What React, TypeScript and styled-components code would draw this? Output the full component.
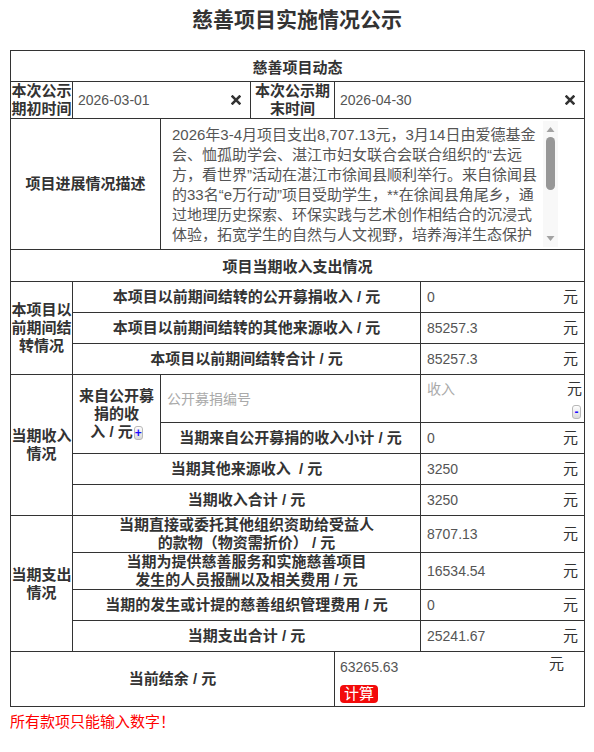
import React from 'react';
import styled, { createGlobalStyle } from 'styled-components';

const FONT = '"Liberation Sans", "Noto Sans CJK SC", sans-serif';

const GlobalStyle = createGlobalStyle`
  html, body { margin: 0; padding: 0; background: #fff; }
  body { font-family: ${FONT}; color: #333; }
  input, textarea, button { font-family: ${FONT}; }
`;

const Page = styled.div`
  padding: 0 10px;
  width: 574px;
`;

const Title = styled.h1`
  margin: 0 0 16px;
  padding-top: 6px;
  height: 28px;
  line-height: 28px;
  font-size: 21px;
  font-weight: bold;
  text-align: center;
  color: #333;
`;

const Sheet = styled.table`
  width: 574px;
  border-collapse: collapse;
  table-layout: fixed;
  border: 1px solid #333;
`;

const Col = styled.col<{ $w: number }>`
  width: ${p => p.$w}px;
`;

const Row = styled.tr<{ $h: number }>`
  height: ${p => p.$h}px;
`;

const SectionHead = styled.th`
  border: 1px solid #333;
  padding: 0;
  font-size: 15px;
  font-weight: bold;
  color: #333;
  text-align: center;
  vertical-align: middle;
`;

const Label = styled.th`
  border: 1px solid #333;
  padding: 0;
  font-size: 15px;
  font-weight: bold;
  line-height: 18px;
  color: #333;
  text-align: center;
  vertical-align: middle;
`;

const ValueCell = styled.td<{ $valign?: string }>`
  border: 1px solid #333;
  padding: 0;
  vertical-align: ${p => p.$valign ?? 'middle'};
`;

const AmountLine = styled.div<{ $padRight?: number }>`
  display: flex;
  align-items: center;
  justify-content: space-between;
  padding: 0 ${p => p.$padRight ?? 6}px 0 6px;
`;

const Amount = styled.input<{ $w?: number; $h?: number }>`
  width: ${p => p.$w ?? 110}px;
  height: ${p => p.$h ?? 22}px;
  border: 0;
  margin: 0;
  padding: 0;
  font-size: 14px;
  color: #555;
  background: transparent;
  outline: none;
  &::placeholder { color: #aaa; }
`;

const Unit = styled.span`
  font-size: 15px;
  line-height: 20px;
  color: #333;
`;

const DateLine = styled.div`
  display: flex;
  align-items: center;
  justify-content: space-between;
  padding: 0 9px 0 5px;
`;

const ClearMark = styled.svg`
  width: 10px;
  height: 10px;
  flex: none;
  stroke: #333;
  stroke-width: 2.6;
  stroke-linecap: square;
  fill: none;
`;

const NotesBox = styled.div`
  position: relative;
  width: 392px;
  height: 126px;
  margin-left: 5px;
`;

const Notes = styled.textarea`
  display: block;
  box-sizing: border-box;
  width: 100%;
  height: 100%;
  margin: 0;
  padding: 4px 16px 0 6px;
  border: 0;
  resize: none;
  outline: none;
  font-size: 15px;
  line-height: 20px;
  color: #555;
  background: #fff;
  overflow-y: auto;
  scrollbar-width: none;
  &::-webkit-scrollbar { display: none; }
`;

const ScrollRail = styled.div`
  position: absolute;
  top: 0;
  right: 0;
  bottom: 0;
  width: 15px;
  display: flex;
  flex-direction: column;
  align-items: center;
  background: #f8f8f8;
  pointer-events: none;
`;

const RailArrow = styled.svg`
  width: 15px;
  height: 15px;
  flex: none;
  fill: #a3a3a3;
`;

const RailThumb = styled.div`
  width: 9px;
  height: 53px;
  margin-top: 1px;
  border-radius: 5px;
  background: #979797;
`;

const RailSpace = styled.div`
  flex: 1;
`;

const CodeInput = styled.input`
  width: 240px;
  height: 22px;
  margin: 0 0 0 6px;
  padding: 0;
  border: 0;
  font-size: 14px;
  color: #555;
  background: transparent;
  outline: none;
  &::placeholder { color: #aaa; }
`;

const IncomeStack = styled.div`
  display: flex;
  flex-direction: column;
`;

const ButtonLine = styled.div`
  display: flex;
  justify-content: flex-end;
  padding: 5px 3px 0 0;
`;

const MiniButton = styled.button`
  display: inline-flex;
  align-items: center;
  justify-content: center;
  box-sizing: border-box;
  width: 9px;
  height: 14px;
  padding: 0;
  margin: 0 0 0 1px;
  border: 1px solid #b8b8b8;
  border-radius: 3px;
  background: linear-gradient(#fefefe, #dadada);
  color: #1a0dff;
  font-size: 12px;
  font-weight: bold;
  line-height: 12px;
  vertical-align: middle;
`;

const BalanceStack = styled.div`
  display: flex;
  flex-direction: column;
  align-items: flex-start;
  padding: 2px 0 0 5px;
`;

const BalanceLine = styled.div`
  display: flex;
  align-items: flex-start;
`;

const CalcButton = styled.button`
  margin-top: 5px;
  height: 18px;
  padding: 0 4px;
  border: 0;
  border-radius: 4px;
  background: #f30a0a;
  color: #fff;
  font-size: 15px;
  line-height: 18px;
`;

const Notice = styled.p`
  margin: 5px 0 0;
  font-size: 15px;
  line-height: 20px;
  color: #f00;
`;

const ClearIcon = () => (
  <ClearMark viewBox="0 0 10 10" aria-hidden>
    <path d="M1.6 1.6L8.4 8.4M8.4 1.6L1.6 8.4" />
  </ClearMark>
);

const ScrollBar = () => (
  <ScrollRail aria-hidden>
    <RailArrow viewBox="0 0 15 15">
      <path d="M3.5 11 L7.5 6 L11.5 11 Z" />
    </RailArrow>
    <RailThumb />
    <RailSpace />
    <RailArrow viewBox="0 0 15 15">
      <path d="M3.5 4 L7.5 9 L11.5 4 Z" />
    </RailArrow>
  </ScrollRail>
);

const notes =
  '2026年3-4月项目支出8,707.13元，3月14日由爱德基金会、恤孤助学会、湛江市妇女联合会联合组织的“去远方，看世界”活动在湛江市徐闻县顺利举行。来自徐闻县的33名“e万行动”项目受助学生，**在徐闻县角尾乡，通过地理历史探索、环保实践与艺术创作相结合的沉浸式体验，拓宽学生的自然与人文视野，培养海洋生态保护意识，激发了孩子们对家乡的热爱与探索世界的梦想。本次活动支出包括交通、餐饮、住宿及研学课程等费用。';

const AmountCell = ({ value }: { value: string }) => (
  <ValueCell>
    <AmountLine>
      <Amount defaultValue={value} />
      <Unit>元</Unit>
    </AmountLine>
  </ValueCell>
);

export default function App() {
  return (
    <Page>
      <GlobalStyle />
      <Title>慈善项目实施情况公示</Title>
      <Sheet>
        <colgroup>
          <Col $w={62} />
          <Col $w={88} />
          <Col $w={90} />
          <Col $w={84} />
          <Col $w={86} />
          <Col $w={164} />
        </colgroup>
        <tbody>
          <Row $h={31}>
            <SectionHead colSpan={6}>慈善项目动态</SectionHead>
          </Row>
          <Row $h={37}>
            <Label>本次公示<br />期初时间</Label>
            <ValueCell colSpan={2}>
              <DateLine>
                <Amount $w={140} defaultValue="2026-03-01" />
                <ClearIcon />
              </DateLine>
            </ValueCell>
            <Label>本次公示期<br />末时间</Label>
            <ValueCell colSpan={2}>
              <DateLine>
                <Amount $w={140} defaultValue="2026-04-30" />
                <ClearIcon />
              </DateLine>
            </ValueCell>
          </Row>
          <Row $h={131}>
            <Label colSpan={2}>项目进展情况描述</Label>
            <ValueCell colSpan={4}>
              <NotesBox>
                <Notes defaultValue={notes} />
                <ScrollBar />
              </NotesBox>
            </ValueCell>
          </Row>
          <Row $h={32}>
            <SectionHead colSpan={6}>项目当期收入支出情况</SectionHead>
          </Row>
          <Row $h={31}>
            <Label rowSpan={3}>本项目以<br />前期间结<br />转情况</Label>
            <Label colSpan={4}>本项目以前期间结转的公开募捐收入 / 元</Label>
            <AmountCell value="0" />
          </Row>
          <Row $h={31}>
            <Label colSpan={4}>本项目以前期间结转的其他来源收入 / 元</Label>
            <AmountCell value="85257.3" />
          </Row>
          <Row $h={31}>
            <Label colSpan={4}>本项目以前期间结转合计 / 元</Label>
            <AmountCell value="85257.3" />
          </Row>
          <Row $h={48}>
            <Label rowSpan={4}>当期收入<br />情况</Label>
            <Label rowSpan={2}>
              来自公开募<br />捐的收<br />入 / 元<MiniButton type="button">+</MiniButton>
            </Label>
            <ValueCell colSpan={3}>
              <CodeInput placeholder="公开募捐编号" />
            </ValueCell>
            <ValueCell>
              <IncomeStack>
                <AmountLine $padRight={2}>
                  <Amount placeholder="收入" />
                  <Unit>元</Unit>
                </AmountLine>
                <ButtonLine>
                  <MiniButton type="button">-</MiniButton>
                </ButtonLine>
              </IncomeStack>
            </ValueCell>
          </Row>
          <Row $h={31}>
            <Label colSpan={3}>当期来自公开募捐的收入小计 / 元</Label>
            <AmountCell value="0" />
          </Row>
          <Row $h={31}>
            <Label colSpan={4}>当期其他来源收入 &nbsp;/ 元</Label>
            <AmountCell value="3250" />
          </Row>
          <Row $h={31}>
            <Label colSpan={4}>当期收入合计 / 元</Label>
            <AmountCell value="3250" />
          </Row>
          <Row $h={37}>
            <Label rowSpan={4}>当期支出<br />情况</Label>
            <Label colSpan={4}>当期直接或委托其他组织资助给受益人<br />的款物（物资需折价） / 元</Label>
            <AmountCell value="8707.13" />
          </Row>
          <Row $h={37}>
            <Label colSpan={4}>当期为提供慈善服务和实施慈善项目<br />发生的人员报酬以及相关费用 / 元</Label>
            <AmountCell value="16534.54" />
          </Row>
          <Row $h={31}>
            <Label colSpan={4}>当期的发生或计提的慈善组织管理费用 / 元</Label>
            <AmountCell value="0" />
          </Row>
          <Row $h={31}>
            <Label colSpan={4}>当期支出合计 / 元</Label>
            <AmountCell value="25241.67" />
          </Row>
          <Row $h={55}>
            <Label colSpan={4}>当前结余 / 元</Label>
            <ValueCell colSpan={2} $valign="top">
              <BalanceStack>
                <BalanceLine>
                  <Amount $w={209} $h={26} defaultValue="63265.63" />
                  <Unit>元</Unit>
                </BalanceLine>
                <CalcButton type="button">计算</CalcButton>
              </BalanceStack>
            </ValueCell>
          </Row>
        </tbody>
      </Sheet>
      <Notice>所有款项只能输入数字！</Notice>
    </Page>
  );
}
